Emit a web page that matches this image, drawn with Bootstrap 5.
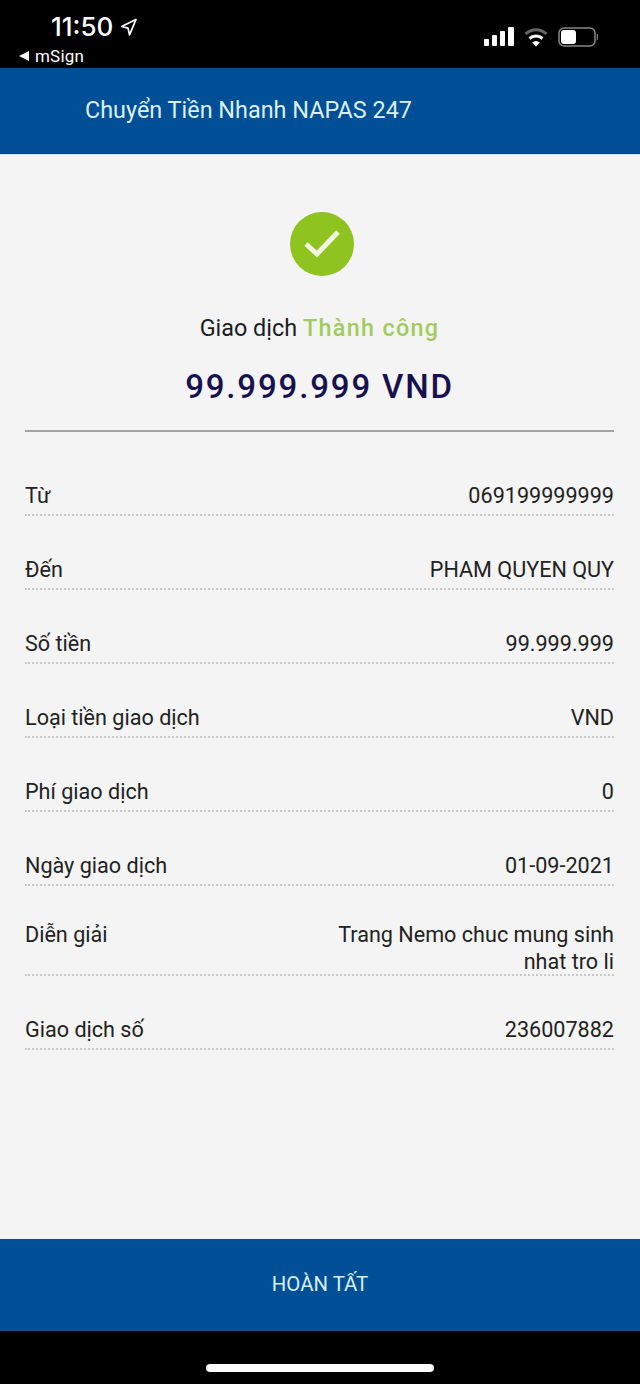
<!DOCTYPE html>
<html lang="vi">
<head>
<meta charset="utf-8">
<title>Chuyển Tiền Nhanh NAPAS 247</title>
<link href="https://cdn.jsdelivr.net/npm/bootstrap@5.3.0/dist/css/bootstrap.min.css" rel="stylesheet">
<style>
html,body{margin:0;background:#000;}
body{font-family:Roboto,"Noto Sans",sans-serif;width:640px;height:1384px;overflow:hidden;}
.phone{width:640px;height:1384px;}
.statusbar{height:68px;background:#000;color:#fff;}
.st-left{padding:13px 0 0 18px;}
.st-time{font-family:Inter,Roboto,sans-serif;font-size:26px;line-height:28px;font-weight:500;padding-left:33px;gap:7px;}
.st-back{font-size:17px;line-height:18px;margin-top:6px;gap:5px;letter-spacing:.2px;}
.st-right{padding:27px 42px 0 0;gap:10px;}
.appbar{height:86px;background:#014f96;color:#dcf0fa;font-size:23.4px;padding-left:85px;box-shadow:inset 0 -1px 0 #0d4276;}
.content{height:1085px;background:#f4f4f4;padding:0 26px 0 25px;border-top:1px solid #cfe6f4;}
.tick{width:64px;height:64px;border-radius:50%;background:#8fc31f;margin:57px 0 0 265px;}
.result{font-size:23.4px;line-height:28px;color:#1c1c24;margin-top:38px;}
.result-ok{color:#a2cb5f;font-weight:500;letter-spacing:1.3px;}
.amount{font-size:33px;line-height:40px;font-weight:500;color:#17124f;letter-spacing:1.85px;margin-top:25px;padding-bottom:23px;margin-bottom:10px;border-bottom:2px solid #a3a3a3;}
.inforow{font-size:21.6px;line-height:27px;color:#222;border-bottom:2px dotted #c8c8c8;height:74px;padding-top:40px;}
.inforow.tall{height:90px;padding-top:35px;}
.inforow .val{text-align:right;max-width:290px;}
.footbtn{height:92px;background:#014f96;color:#d9eef9;font-size:20.4px;box-shadow:inset 0 1px 0 #1f4a78,inset 0 -2px 0 #214a78;padding-bottom:2px;}
.bottom{height:53px;background:#000;padding-top:33px;}
.homebar{width:228px;height:8px;border-radius:4px;background:#fff;}
</style>
</head>
<body>
<div class="phone d-flex flex-column">
  <div class="statusbar d-flex justify-content-between">
    <div class="st-left">
      <div class="st-time d-flex align-items-center">11:50
        <svg width="17" height="18" viewBox="0 0 16 17" fill="none" stroke="#fff" stroke-width="1.6" stroke-linejoin="round"><path d="M15 1.500 1.500 8l6 1.500 1.500 6.500z"/></svg>
      </div>
      <div class="st-back d-flex align-items-center">
        <svg width="12" height="12" viewBox="0 0 12 12" fill="#fff"><path d="M11 1v10L1 6z"/></svg>mSign
      </div>
    </div>
    <div class="st-right d-flex align-items-start">
      <svg width="30" height="20" viewBox="0 0 30 20" fill="#fff"><rect x="0" y="12" width="5" height="7" rx="1"/><rect x="8" y="8" width="5" height="11" rx="1"/><rect x="16" y="4" width="5" height="15" rx="1"/><rect x="24" y="0" width="6" height="19" rx="1"/></svg>
      <svg width="24" height="20" viewBox="0 0 24 20" fill="none"><path d="M1.500 7a15 15 0 0 1 21 0" stroke="#666" stroke-width="3"/><path d="M5.500 11.500a10 10 0 0 1 13 0" stroke="#fff" stroke-width="3"/><path d="M12 19.500l-3.800-4a5.500 5.500 0 0 1 7.600 0z" fill="#fff"/></svg>
      <svg width="40" height="20" viewBox="0 0 40 20" fill="none"><rect x="1" y="1" width="36" height="18" rx="5" stroke="#888" stroke-width="1.500"/><rect x="3" y="3" width="15" height="14" rx="3" fill="#fff"/><path d="M39.500 7v6" stroke="#777" stroke-width="1.500"/></svg>
    </div>
  </div>

  <div class="appbar d-flex align-items-center">Chuyển Tiền Nhanh NAPAS 247</div>

  <div class="content">
    <div class="tick d-flex align-items-center justify-content-center">
      <svg width="38" height="30" viewBox="0 0 38 30" fill="none" stroke="#f0f6df" stroke-width="5"><path d="M3 15l11 10L35 3"/></svg>
    </div>
    <div class="result text-center">Giao dịch <span class="result-ok">Thành công</span></div>
    <div class="amount text-center">99.999.999 VND</div>
    <div class="inforow d-flex justify-content-between align-items-start"><span>Từ</span><span class="val">069199999999</span></div>
    <div class="inforow d-flex justify-content-between align-items-start"><span>Đến</span><span class="val">PHAM QUYEN QUY</span></div>
    <div class="inforow d-flex justify-content-between align-items-start"><span>Số tiền</span><span class="val">99.999.999</span></div>
    <div class="inforow d-flex justify-content-between align-items-start"><span>Loại tiền giao dịch</span><span class="val">VND</span></div>
    <div class="inforow d-flex justify-content-between align-items-start"><span>Phí giao dịch</span><span class="val">0</span></div>
    <div class="inforow d-flex justify-content-between align-items-start"><span>Ngày giao dịch</span><span class="val">01-09-2021</span></div>
    <div class="inforow tall d-flex justify-content-between align-items-start"><span>Diễn giải</span><span class="val">Trang Nemo chuc mung sinh nhat tro li</span></div>
    <div class="inforow d-flex justify-content-between align-items-start"><span>Giao dịch số</span><span class="val">236007882</span></div>
  </div>

  <div class="footbtn d-flex align-items-center justify-content-center">HOÀN TẤT</div>
  <div class="bottom d-flex justify-content-center align-items-start"><div class="homebar"></div></div>
</div>
</body>
</html>
